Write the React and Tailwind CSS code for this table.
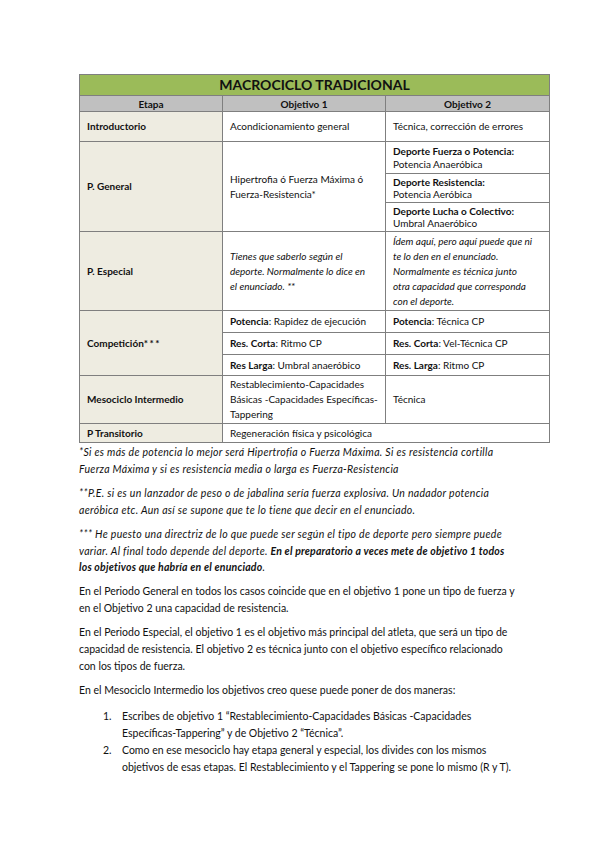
import React from "react";

const F = { fontFamily: "Lato, 'Liberation Sans', sans-serif" };

export default function App() {
  const td = "border border-[#7f7f7f] px-[7px] align-middle";
  const c1 = td + " bg-[#eeece1] font-bold";
  return (
    <div className="w-[599px] h-[848px] bg-white text-[#111]" style={F}>
      <div className="pt-[74px] pl-[79px] w-[549px]">
        <table className="border-collapse w-[470px] table-fixed text-[10px] leading-[15px]">
          <colgroup>
            <col className="w-[143px]" />
            <col className="w-[163px]" />
            <col className="w-[164px]" />
          </colgroup>
          <tbody>
            <tr className="h-[21px]">
              <td colSpan={3} className="border border-[#7f7f7f] bg-[#9bbb59] text-center font-bold text-[14px] leading-[20px]">MACROCICLO TRADICIONAL</td>
            </tr>
            <tr className="h-[16px]">
              <td className="border border-[#7f7f7f] bg-[#c0c0c0] text-center font-bold leading-[14px]">Etapa</td>
              <td className="border border-[#7f7f7f] bg-[#c0c0c0] text-center font-bold leading-[14px]">Objetivo 1</td>
              <td className="border border-[#7f7f7f] bg-[#c0c0c0] text-center font-bold leading-[14px]">Objetivo 2</td>
            </tr>
            <tr className="h-[30px]">
              <td className={c1}>Introductorio</td>
              <td className={td}>Acondicionamiento general</td>
              <td className={td}>Técnica, corrección de errores</td>
            </tr>
            <tr className="h-[32px]">
              <td rowSpan={3} className={c1}>P. General</td>
              <td rowSpan={3} className={td}>Hipertrofia ó Fuerza Máxima ó<br />Fuerza-Resistencia*</td>
              <td className={td + " leading-[12.5px]"}><b>Deporte Fuerza o Potencia:</b><br />Potencia Anaeróbica</td>
            </tr>
            <tr className="h-[29px]">
              <td className={td + " leading-[12.5px]"}><b>Deporte Resistencia:</b><br />Potencia Aeróbica</td>
            </tr>
            <tr className="h-[29px]">
              <td className={td + " leading-[12.5px]"}><b>Deporte Lucha o Colectivo:</b><br />Umbral Anaeróbico</td>
            </tr>
            <tr className="h-[79px]">
              <td className={c1}>P. Especial</td>
              <td className={td + " italic"}>Tienes que saberlo según el<br />deporte. Normalmente lo dice en<br />el enunciado. **</td>
              <td className={td + " italic whitespace-nowrap overflow-hidden"}>Ídem aquí, pero aquí puede que ni<br />te lo den en el enunciado.<br />Normalmente es técnica junto<br />otra capacidad que corresponda<br />con el deporte.</td>
            </tr>
            <tr className="h-[22px]">
              <td rowSpan={3} className={c1}>Competición<span className="tracking-[1.5px]">***</span></td>
              <td className={td}><b>Potencia</b>: Rapidez de ejecución</td>
              <td className={td}><b>Potencia</b>: Técnica CP</td>
            </tr>
            <tr className="h-[22px]">
              <td className={td}><b>Res. Corta</b>: Ritmo CP</td>
              <td className={td}><b>Res. Corta</b>: Vel-Técnica CP</td>
            </tr>
            <tr className="h-[21px]">
              <td className={td}><b>Res Larga</b>: Umbral anaeróbico</td>
              <td className={td}><b>Res. Larga</b>: Ritmo CP</td>
            </tr>
            <tr className="h-[48px]">
              <td className={c1}>Mesociclo Intermedio</td>
              <td className={td}>Restablecimiento-Capacidades<br />Básicas -Capacidades Específicas-<br />Tappering</td>
              <td className={td}>Técnica</td>
            </tr>
            <tr className="h-[19px]">
              <td className={c1 + " leading-[14px]"}>P Transitorio</td>
              <td colSpan={2} className={td + " leading-[14px]"}>Regeneración física y psicológica</td>
            </tr>
          </tbody>
        </table>

        <div className="text-[10.5px] leading-[16.7px] mt-[1px]">
          <p className="italic tracking-[0.3px] mb-[7.5px]">*Si es más de potencia lo mejor será Hipertrofia o Fuerza Máxima. Si es resistencia cortilla<br />Fuerza Máxima y si es resistencia media o larga es Fuerza-Resistencia</p>
          <p className="italic tracking-[0.3px] mb-[7.5px]">**P.E. si es un lanzador de peso o de jabalina sería fuerza explosiva. Un nadador potencia<br />aeróbica etc. Aun así se supone que te lo tiene que decir en el enunciado.</p>
          <p className="italic tracking-[0.3px] mb-[7.5px]">*** He puesto una directriz de lo que puede ser según el tipo de deporte pero siempre puede<br />variar. Al final todo depende del deporte. <b className="tracking-[0.2px]">En el preparatorio a veces mete de objetivo 1 todos<br />los objetivos que habría en el enunciado</b>.</p>
          <p className="mb-[7.5px]">En el Periodo General en todos los casos coincide que en el objetivo 1 pone un tipo de fuerza y<br />en el Objetivo 2 una capacidad de resistencia.</p>
          <p className="mb-[7.5px]">En el Periodo Especial, el objetivo 1 es el objetivo más principal del atleta, que será un tipo de<br />capacidad de resistencia. El objetivo 2 es técnica junto con el objetivo específico relacionado<br />con los tipos de fuerza.</p>
          <p className="mb-[9px]">En el Mesociclo Intermedio los objetivos creo quese puede poner de dos maneras:</p>
          <div className="pl-[24px] leading-[17px]">
            <div className="flex">
              <span className="w-[19px] shrink-0">1.</span>
              <span>Escribes de objetivo 1 “Restablecimiento-Capacidades Básicas -Capacidades<br />Específicas-Tappering” y de Objetivo 2 “Técnica”.</span>
            </div>
            <div className="flex">
              <span className="w-[19px] shrink-0">2.</span>
              <span>Como en ese mesociclo hay etapa general y especial, los divides con los mismos<br />objetivos de esas etapas. El Restablecimiento y el Tappering se pone lo mismo (R y T).</span>
            </div>
          </div>
        </div>
      </div>
    </div>
  );
}
